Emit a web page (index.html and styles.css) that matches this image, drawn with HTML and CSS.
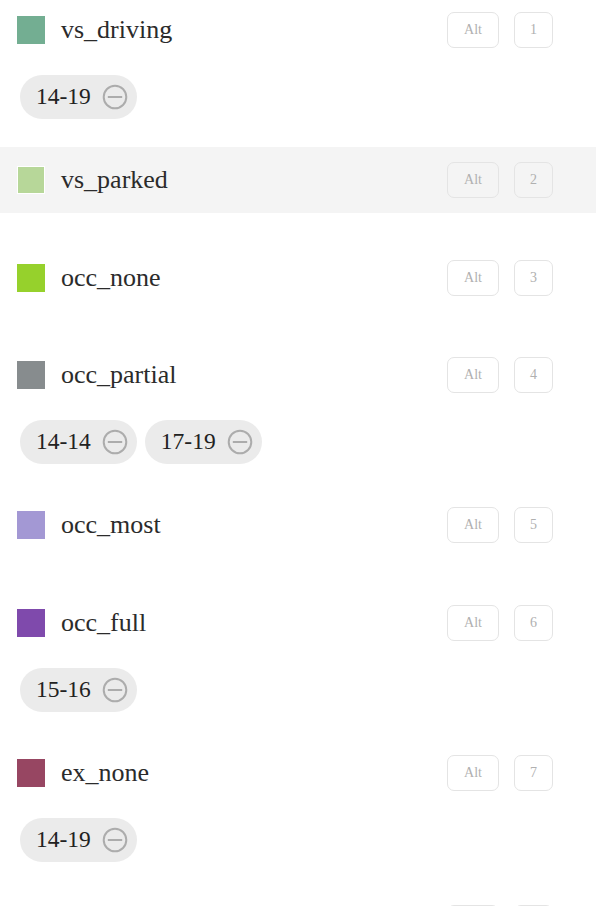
FILE: index.html
```html
<!DOCTYPE html>
<html lang="en">
<head>
<meta charset="utf-8">
<title>Legend</title>
<link rel="stylesheet" href="styles.css">
</head>
<body>
<ul class="legend">
  <li class="item has-chips">
    <div class="head">
      <span class="swatch c-driving"></span>
      <span class="label">vs_driving</span>
      <span class="key key-alt">Alt</span>
      <span class="key key-num">1</span>
    </div>
    <div class="chips">
      <span class="chip"><span class="chip-text">14-19</span><svg class="minus" viewBox="0 0 26 26" width="26" height="26"><circle cx="13" cy="13" r="11.3" fill="none" stroke="#acacac" stroke-width="2"/><line x1="5.8" y1="13" x2="20.2" y2="13" stroke="#acacac" stroke-width="2"/></svg></span>
    </div>
  </li>
  <li class="item hover">
    <div class="head">
      <span class="swatch c-parked"></span>
      <span class="label">vs_parked</span>
      <span class="key key-alt">Alt</span>
      <span class="key key-num">2</span>
    </div>
  </li>
  <li class="item">
    <div class="head">
      <span class="swatch c-none"></span>
      <span class="label">occ_none</span>
      <span class="key key-alt">Alt</span>
      <span class="key key-num">3</span>
    </div>
  </li>
  <li class="item has-chips">
    <div class="head">
      <span class="swatch c-partial"></span>
      <span class="label">occ_partial</span>
      <span class="key key-alt">Alt</span>
      <span class="key key-num">4</span>
    </div>
    <div class="chips">
      <span class="chip"><span class="chip-text">14-14</span><svg class="minus" viewBox="0 0 26 26" width="26" height="26"><circle cx="13" cy="13" r="11.3" fill="none" stroke="#acacac" stroke-width="2"/><line x1="5.8" y1="13" x2="20.2" y2="13" stroke="#acacac" stroke-width="2"/></svg></span>
      <span class="chip"><span class="chip-text">17-19</span><svg class="minus" viewBox="0 0 26 26" width="26" height="26"><circle cx="13" cy="13" r="11.3" fill="none" stroke="#acacac" stroke-width="2"/><line x1="5.8" y1="13" x2="20.2" y2="13" stroke="#acacac" stroke-width="2"/></svg></span>
    </div>
  </li>
  <li class="item">
    <div class="head">
      <span class="swatch c-most"></span>
      <span class="label">occ_most</span>
      <span class="key key-alt">Alt</span>
      <span class="key key-num">5</span>
    </div>
  </li>
  <li class="item has-chips">
    <div class="head">
      <span class="swatch c-full"></span>
      <span class="label">occ_full</span>
      <span class="key key-alt">Alt</span>
      <span class="key key-num">6</span>
    </div>
    <div class="chips">
      <span class="chip"><span class="chip-text">15-16</span><svg class="minus" viewBox="0 0 26 26" width="26" height="26"><circle cx="13" cy="13" r="11.3" fill="none" stroke="#acacac" stroke-width="2"/><line x1="5.8" y1="13" x2="20.2" y2="13" stroke="#acacac" stroke-width="2"/></svg></span>
    </div>
  </li>
  <li class="item has-chips">
    <div class="head">
      <span class="swatch c-exnone"></span>
      <span class="label">ex_none</span>
      <span class="key key-alt">Alt</span>
      <span class="key key-num">7</span>
    </div>
    <div class="chips">
      <span class="chip"><span class="chip-text">14-19</span><svg class="minus" viewBox="0 0 26 26" width="26" height="26"><circle cx="13" cy="13" r="11.3" fill="none" stroke="#acacac" stroke-width="2"/><line x1="5.8" y1="13" x2="20.2" y2="13" stroke="#acacac" stroke-width="2"/></svg></span>
    </div>
  </li>
  <li class="item">
    <div class="head">
      <span class="swatch c-expartial"></span>
      <span class="label">ex_partial</span>
      <span class="key key-alt">Alt</span>
      <span class="key key-num">8</span>
    </div>
  </li>
</ul>
</body>
</html>
```
FILE: styles.css
```css
html {
  overflow: hidden;
}

body {
  margin: 0;
  background: #ffffff;
  font-family: "Liberation Serif", "Times New Roman", serif;
  color: #2b2b2b;
}

.legend {
  list-style: none;
  margin: -3px 0 0 0;
  padding: 0;
}

.item {
  padding-bottom: 31.5px;
}

.item.has-chips {
  padding-bottom: 28px;
}

.head {
  display: flex;
  align-items: center;
  height: 66px;
  padding: 0 43px 0 17px;
}

.item.hover .head {
  background: #f4f4f4;
}

.swatch {
  width: 28px;
  height: 28px;
  box-sizing: border-box;
  flex: none;
}

.item.hover .swatch {
  border: 1px solid #ffffff;
}

.label {
  flex: 1;
  margin-left: 16px;
  font-size: 26px;
  line-height: 1;
  color: #2b2b2b;
}

.key {
  display: flex;
  align-items: center;
  justify-content: center;
  box-sizing: border-box;
  height: 36px;
  border: 1px solid #e4e4e4;
  border-radius: 7px;
  font-size: 14px;
  color: #b0b0b0;
}

.key-alt {
  width: 52px;
}

.key-num {
  width: 39px;
  margin-left: 15px;
}

.chips {
  display: flex;
  gap: 8px;
  margin: 12px 0 0 20px;
}

.chip {
  display: inline-flex;
  align-items: center;
  gap: 11px;
  height: 44px;
  padding: 0 9px 0 16px;
  border-radius: 22px;
  background: #ebebeb;
}

.chip-text {
  font-size: 23.5px;
  line-height: 1;
  color: #222222;
}

.minus {
  display: block;
}

.c-driving { background: #73ae92; }
.c-parked { background: #b7d799; }
.c-none { background: #96d12c; }
.c-partial { background: #878c8e; }
.c-most { background: #a398d4; }
.c-full { background: #7f4aac; }
.c-exnone { background: #974662; }
.c-expartial { background: #c9c9c9; }
```
